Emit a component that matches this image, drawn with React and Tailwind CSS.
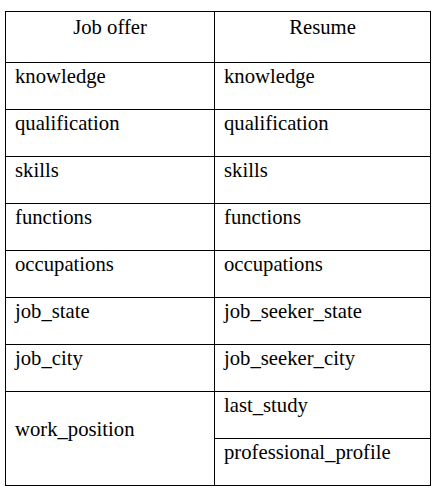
const rows = [
  ['knowledge', 'knowledge'],
  ['qualification', 'qualification'],
  ['skills', 'skills'],
  ['functions', 'functions'],
  ['occupations', 'occupations'],
  ['job_state', 'job_seeker_state'],
  ['job_city', 'job_seeker_city'],
];

const cell = 'border border-black pl-[9px] pr-[9px] pt-[2px] pb-[21px] align-top text-left font-normal leading-[23px]';
const head = 'border border-black px-[9px] pt-[4px] pb-[23px] align-top text-center font-normal leading-[23px]';

export default function App() {
  return (
    <div className="min-h-screen bg-white pt-[11px] pl-[5px] font-['Liberation_Serif','Times_New_Roman','DejaVu_Serif',serif]">
      <table className="table-fixed border-collapse w-[426px] text-[20.7px] text-black">
        <colgroup>
          <col className="w-[209px]" />
          <col />
        </colgroup>
        <thead>
          <tr>
            <th className={head}>Job offer</th>
            <th className={head}>Resume</th>
          </tr>
        </thead>
        <tbody>
          {rows.map(([a, b], i) => (
            <tr key={i}>
              <td className={cell}>{a}</td>
              <td className={cell}>{b}</td>
            </tr>
          ))}
          <tr>
            <td rowSpan={2} className="border border-black pl-[9px] pr-[9px] pt-[2px] pb-[21px] align-middle text-left leading-[23px]">
              work_position
            </td>
            <td className={cell}>last_study</td>
          </tr>
          <tr>
            <td className={cell}>professional_profile</td>
          </tr>
        </tbody>
      </table>
    </div>
  );
}
